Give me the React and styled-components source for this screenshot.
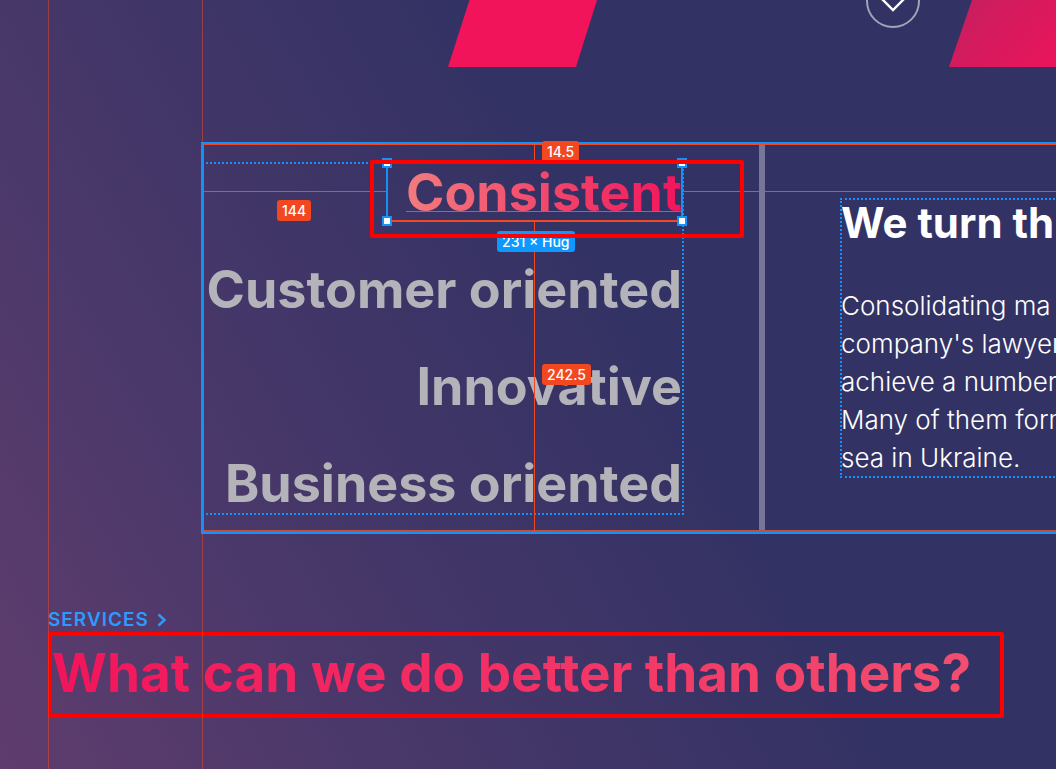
import React from "react";
import styled, { createGlobalStyle } from "styled-components";

const blue = "#1592f8";
const orange = "#f24822";
const pink = "#f2145b";

const GlobalStyle = createGlobalStyle`
  *, *::before, *::after { box-sizing: border-box; }
  html, body { margin: 0; }
  body {
    background: #333264;
    color: #fff;
    font-family: Inter, "Open Sans", sans-serif;
  }
  h1, h2, h3, p, ul { margin: 0; padding: 0; }
`;

const Page = styled.main`
  position: relative;
  min-height: 100vh;
  overflow: hidden;
  background: linear-gradient(
    60deg,
    #5e3c6d 0%,
    #573b6c 10%,
    #4b386a 24%,
    #3f3567 42%,
    #333264 60%
  );
`;

const ColumnGuide = styled.span`
  position: absolute;
  top: 0;
  bottom: 0;
  left: ${(p) => p.$x}px;
  width: 1px;
  background: rgba(242, 72, 34, 0.5);
  pointer-events: none;
`;

const Hero = styled.header`
  display: flex;
  align-items: flex-start;
  height: 67px;
  padding-left: 448px;
  overflow: hidden;
`;

const Shape = styled.svg`
  display: block;
  flex: none;
`;

const ScrollButton = styled.button`
  flex: none;
  display: grid;
  place-items: center;
  width: 54px;
  height: 54px;
  margin: -26px 29px 0 269px;
  padding: 0;
  border: 2px solid #a3a2b8;
  border-radius: 50%;
  background: none;
  color: #fff;
`;

const Panel = styled.section`
  position: relative;
  display: flex;
  margin: 75px 0 0 201px;
  border: 2px solid ${blue};
  border-right: 0;
  box-shadow: inset 1px 1px 0 ${orange}, inset 0 -2px 0 #c2503f;
`;

const ValueList = styled.ul`
  flex: none;
  display: flex;
  flex-direction: column;
  gap: 37px;
  width: 480px;
  margin: 19px 76px 18px 0;
  padding-right: 1px;
  outline: 2px dotted ${blue};
  outline-offset: -1px;
  list-style: none;
  text-align: right;
`;

const Value = styled.li`
  position: relative;
  font-size: 52px;
  line-height: 60px;
  font-weight: 700;
  white-space: nowrap;
  color: #b3b3b9;
`;

const ActiveValue = styled.span`
  display: inline-block;
  background: linear-gradient(90deg, #f27c7e, ${pink});
  background-clip: text;
  color: transparent;
  text-decoration: underline 1px ${blue};
  text-decoration-skip-ink: none;
  text-underline-offset: 0;
`;

const Selection = styled.span`
  position: absolute;
  inset: -1px -1px 1px 183px;
  border: 1px solid ${blue};
  box-shadow: inset 0 0 0 1px ${orange};
`;

const Handles = styled.span`
  position: absolute;
  inset: -5px;
  display: grid;
  grid-template-columns: auto auto;
  justify-content: space-between;
  align-content: space-between;
`;

const Handle = styled.span`
  width: 10px;
  height: 10px;
  border: 2px solid ${blue};
  background: #fff;
`;

const Callout = styled.span`
  position: absolute;
  z-index: 2;
  inset: -3px -62px -15px 167px;
  border: 4px solid #f00;
  border-radius: 2px;
`;

const Divider = styled.div`
  flex: none;
  width: 6px;
  margin: 1px 0 2px;
  border: 1px dotted ${blue};
  border-width: 0 1px;
  background: #77769a;
`;

const Story = styled.article`
  flex: 1;
  min-width: 0;
  align-self: center;
  margin: 0 -2px 0 76px;
  outline: 2px dotted ${blue};
  outline-offset: -1px;
  overflow: hidden;
  white-space: nowrap;
`;

const StoryTitle = styled.h2`
  margin-bottom: 40px;
  font-size: 42px;
  line-height: 48px;
  font-weight: 700;
`;

const StoryText = styled.p`
  font-size: 26px;
  line-height: 38px;
  font-weight: 300;
`;

const Line = styled.span`
  display: block;
`;

const Rule = styled.span`
  position: absolute;
  left: ${(p) => p.$x}px;
  top: ${(p) => p.$y}px;
  width: ${(p) => p.$w || "1px"};
  height: ${(p) => p.$h || "1px"};
  background: ${orange};
`;

const Measure = styled.span`
  position: absolute;
  z-index: 1;
  left: ${(p) => p.$x}px;
  top: ${(p) => p.$y}px;
  padding: 0 5px;
  border-radius: 3px;
  background: ${(p) => p.$color || orange};
  font-size: 14px;
  line-height: 21px;
  font-weight: 500;
  white-space: nowrap;
`;

const Services = styled.section`
  padding: 74px 52px 50px 48px;
`;

const ServicesLink = styled.a`
  display: flex;
  align-items: center;
  gap: 8px;
  width: max-content;
  color: #2a9bff;
  font-size: 19px;
  line-height: 24px;
  font-weight: 600;
  letter-spacing: 1px;
  text-decoration: none;
`;

const ServicesTitle = styled.h1`
  padding-bottom: 4px;
  border: 4px solid #f00;
  border-radius: 2px;
  font-size: 53px;
  line-height: 74px;
  font-weight: 700;
  white-space: nowrap;
`;

const TitleText = styled.span`
  display: block;
  background: linear-gradient(90deg, ${pink}, #f2506f);
  background-clip: text;
  color: transparent;
`;

export default function App() {
  return (
    <>
      <GlobalStyle />
      <Page>
        <ColumnGuide $x={48} />
        <ColumnGuide $x={202} />

        <Hero>
          <Shape width="149" height="67" viewBox="0 0 149 67" aria-hidden="true">
            <path d="M21.5 0H149L128 67H0Z" fill={pink} />
          </Shape>
          <ScrollButton type="button" aria-label="Scroll down">
            <svg width="50" height="50" viewBox="0 0 50 50" fill="none" aria-hidden="true">
              <path d="M13 22L25 34L37 22" stroke="currentColor" strokeWidth="2.4" />
            </svg>
          </ScrollButton>
          <Shape width="149" height="67" viewBox="0 0 149 67" aria-hidden="true">
            <defs>
              <linearGradient id="fade" gradientUnits="userSpaceOnUse" x1="10" y1="-10" x2="100" y2="70">
                <stop offset="0" stopColor="#c41f5f" />
                <stop offset="1" stopColor="#ea155b" />
              </linearGradient>
            </defs>
            <path d="M23 0H149L128 67H0Z" fill="url(#fade)" />
          </Shape>
        </Hero>

        <Panel>
          <ValueList>
            <Value>
              <ActiveValue>Consistent</ActiveValue>
              <Selection>
                <Handles>
                  <Handle />
                  <Handle />
                  <Handle />
                  <Handle />
                </Handles>
              </Selection>
              <Callout />
            </Value>
            <Value>Customer oriented</Value>
            <Value>Innovative</Value>
            <Value>Business oriented</Value>
          </ValueList>
          <Divider />
          <Story>
            <StoryTitle>We turn th</StoryTitle>
            <StoryText>
              <Line>Consolidating ma</Line>
              <Line>company's lawyer</Line>
              <Line>achieve a number</Line>
              <Line>Many of them form</Line>
              <Line>sea in Ukraine.</Line>
            </StoryText>
          </Story>

          <Measure $x={339} $y={-3}>14.5</Measure>
          <Measure $x={74} $y={56}>144</Measure>
          <Measure $x={339} $y={220}>242.5</Measure>
          <Measure $x={294} $y={87} $color="#0d99ff">231 × Hug</Measure>
          <Rule $x={0} $y={47} $w="184px" />
          <Rule $x={480} $y={47} $w="calc(100% - 480px)" />
          <Rule $x={331} $y={0} $h="18px" />
          <Rule $x={331} $y={77} $h="calc(100% - 77px)" />
        </Panel>

        <Services>
          <ServicesLink href="#services">
            SERVICES
            <svg width="10" height="14" viewBox="0 0 10 14" fill="none" aria-hidden="true">
              <path d="M1.5 1.5L7.5 7L1.5 12.5" stroke="currentColor" strokeWidth="2.4" />
            </svg>
          </ServicesLink>
          <ServicesTitle><TitleText>What can we do better than others?</TitleText></ServicesTitle>
        </Services>
      </Page>
    </>
  );
}
